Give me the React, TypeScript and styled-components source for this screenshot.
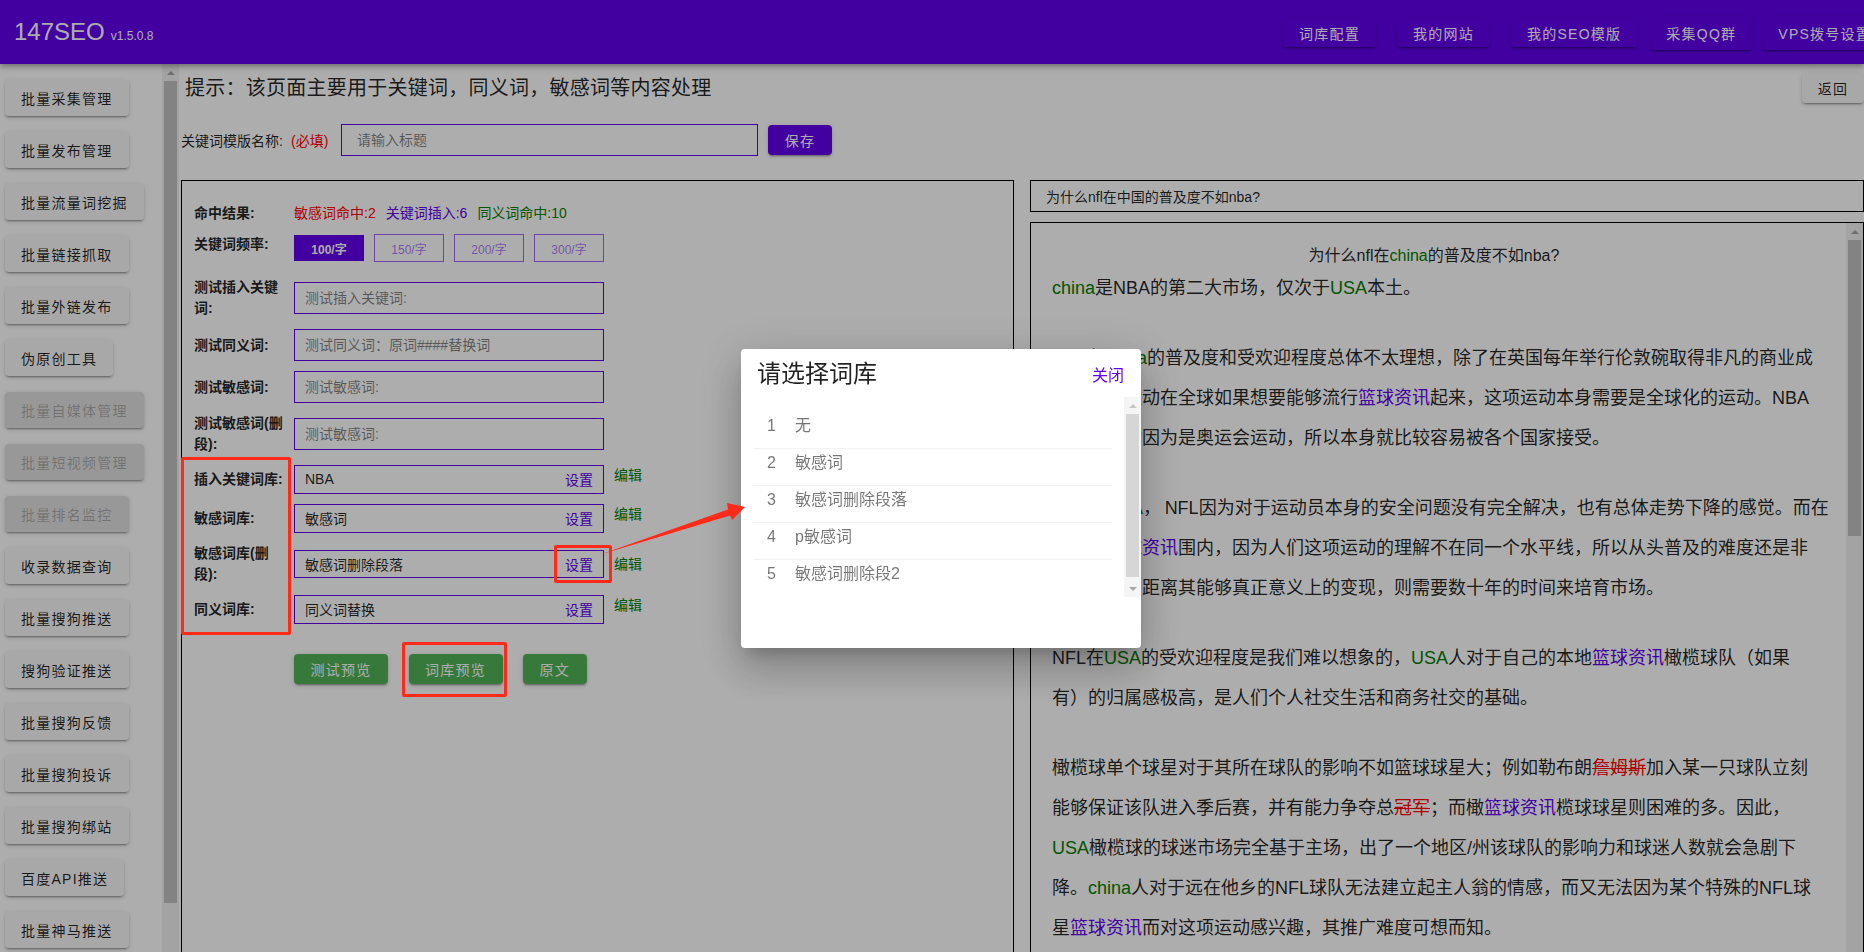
import React from "react";
import styled, { createGlobalStyle, css } from "styled-components";

const Global = createGlobalStyle`
  html, body { margin: 0; padding: 0; height: 100%; overflow: hidden; background: #fff; }
  body { font-family: "Liberation Sans", "Noto Sans CJK SC", sans-serif; color: rgba(0,0,0,.87); font-size: 14px; }
  * { box-sizing: border-box; }
`;

const raised = css`
  box-shadow: 0 3px 1px -2px rgba(0,0,0,.2), 0 2px 2px 0 rgba(0,0,0,.14), 0 1px 5px 0 rgba(0,0,0,.12);
`;

const Page = styled.div`
  width: 1864px;
  height: 952px;
  overflow: hidden;
  display: flex;
  flex-direction: column;
`;

const Header = styled.header`
  flex: 0 0 64px;
  display: flex;
  align-items: center;
  background: #6200ee;
  color: #fff;
  position: relative;
  z-index: 2;
  box-shadow: 0 2px 4px -1px rgba(0,0,0,.2), 0 4px 5px 0 rgba(0,0,0,.14), 0 1px 10px 0 rgba(0,0,0,.12);
`;

const Brand = styled.div`
  flex: 0 0 1283px;
  padding-left: 14px;
  display: flex;
  align-items: baseline;
  gap: 6px;
  font-size: 24px;
  small { font-size: 12px; }
`;

const Nav = styled.nav`
  display: flex;
  flex: 0 0 auto;
  align-items: center;
  padding-top: 1px;
`;

const NavButton = styled.button<{ $gap: number; $tall?: boolean }>`
  margin-left: ${(p) => p.$gap}px;
  height: ${(p) => (p.$tall ? 34 : 29)}px;
  padding: 0 16px;
  border: 0;
  border-radius: 4px;
  background: #6200ee;
  color: #fff;
  font: inherit;
  font-size: 14px;
  letter-spacing: 1.25px;
  white-space: nowrap;
  flex: 0 0 auto;
  ${raised}
`;

const Body = styled.div`
  flex: 1 1 auto;
  min-height: 0;
  display: flex;
  overflow: hidden;
`;

/* Painted scroll bar: the photographed browser hides native ones. */
const Rail = styled.div<{ $track: string }>`
  flex: 0 0 17px;
  width: 17px;
  display: flex;
  flex-direction: column;
  background: ${(p) => p.$track};
`;

const RailArrow = styled.div<{ $down?: boolean; $c: string }>`
  flex: 0 0 17px;
  display: flex;
  align-items: center;
  justify-content: center;
  margin-top: ${(p) => (p.$down ? "auto" : "0")};
  &::before {
    content: "";
    border-left: 4px solid transparent;
    border-right: 4px solid transparent;
    ${(p) => (p.$down ? `border-top: 4px solid ${p.$c};` : `border-bottom: 4px solid ${p.$c};`)}
  }
`;

const RailThumb = styled.div<{ $h: number; $c: string }>`
  flex: 0 0 ${(p) => p.$h}px;
  margin: 0 2px;
  background: ${(p) => p.$c};
`;

const Sidebar = styled.aside`
  flex: 0 0 179px;
  display: flex;
  overflow: hidden;
`;

const SideList = styled.div`
  flex: 1 1 auto;
  display: flex;
  flex-direction: column;
  align-items: flex-start;
  gap: 16px;
  padding: 16px 0 0 5px;
`;

const SideButton = styled.button<{ $off?: boolean }>`
  flex: 0 0 36px;
  padding: 0 16px;
  border: 0;
  border-radius: 4px;
  font: inherit;
  font-size: 14px;
  letter-spacing: 1.25px;
  white-space: nowrap;
  background: ${(p) => (p.$off ? "#e0e0e0" : "#f8f8f8")};
  color: ${(p) => (p.$off ? "rgba(0,0,0,.26)" : "rgba(0,0,0,.87)")};
  ${raised}
`;

const Main = styled.main`
  flex: 1 1 auto;
  min-width: 0;
  padding-left: 2px;
  display: flex;
  flex-direction: column;
  overflow: hidden;
`;

const TitleRow = styled.div`
  flex: 0 0 auto;
  margin-top: 9px;
  height: 30px;
  padding-left: 4px;
  display: flex;
  align-items: center;
  justify-content: space-between;
`;

const PageTitle = styled.h1`
  margin: 0 0 3px;
  font-size: 20px;
  font-weight: 400;
  letter-spacing: .25px;
`;

const BackButton = styled.button`
  height: 30px;
  width: 62px;
  padding: 0;
  border: 0;
  border-radius: 4px;
  background: #f8f8f8;
  color: rgba(0,0,0,.87);
  font: inherit;
  font-size: 14px;
  letter-spacing: 1.25px;
  ${raised}
`;

const NameRow = styled.div`
  flex: 0 0 auto;
  margin-top: 21px;
  height: 32px;
  display: flex;
  align-items: center;
`;

const NameLabel = styled.label`
  flex: 0 0 110px;
  font-size: 14px;
  white-space: nowrap;
`;

const Required = styled.span`
  flex: 0 0 50px;
  color: #f00;
  white-space: nowrap;
`;

const TextInput = styled.input<{ $w: number }>`
  width: ${(p) => p.$w}px;
  height: 32px;
  flex: 0 0 auto;
  padding: 0 15px;
  border: 1px solid #6200ee;
  border-radius: 0;
  outline: 0;
  background: transparent;
  font: inherit;
  font-size: 14px;
  &::placeholder { color: rgba(0,0,0,.5); opacity: 1; }
`;

const SmallInput = styled(TextInput)`
  padding: 0 10px;
`;

const SaveButton = styled.button`
  margin-left: 10px;
  width: 64px;
  height: 30px;
  border: 0;
  border-radius: 4px;
  background: #6200ee;
  color: #fff;
  font: inherit;
  font-size: 14px;
  letter-spacing: 1.25px;
  ${raised}
`;

const Columns = styled.div`
  flex: 0 0 800px;
  margin-top: 24px;
  display: grid;
  grid-template-columns: 833px 834px;
  gap: 16px;
`;

const LeftPanel = styled.section`
  border: 1px solid #000;
  padding: 22px 12px 0;
  display: flex;
  flex-direction: column;
  gap: 10px;
`;

const Row = styled.div<{ $align?: string; $mt?: number; $h?: number }>`
  display: flex;
  align-items: ${(p) => p.$align ?? "center"};
  margin-top: ${(p) => p.$mt ?? 0}px;
  min-height: ${(p) => p.$h ?? 0}px;
`;

const RowLabel = styled.div`
  flex: 0 0 100px;
  padding-right: 10px;
  font-size: 14px;
  font-weight: 700;
  line-height: 21px;
`;

const Hits = styled.div`
  display: flex;
  gap: 10px;
  font-size: 14px;
  line-height: 21px;
`;

const Hit = styled.span<{ $c: string }>`
  color: ${(p) => p.$c};
`;

const FreqGroup = styled.div`
  display: flex;
  align-items: center;
  gap: 10px;
  height: 28px;
`;

const FreqButton = styled.button<{ $on?: boolean }>`
  width: 70px;
  height: ${(p) => (p.$on ? 26 : 28)}px;
  padding: 0;
  font: inherit;
  font-size: 12px;
  border-radius: 0;
  border: ${(p) => (p.$on ? "0" : "1px solid rgba(98,0,238,.6)")};
  background: ${(p) => (p.$on ? "#6200ee" : "transparent")};
  color: ${(p) => (p.$on ? "#fff" : "rgba(98,0,238,.55)")};
  font-weight: ${(p) => (p.$on ? 700 : 400)};
`;

const LibField = styled.div`
  width: 310px;
  height: 28.33px;
  flex: 0 0 auto;
  padding: 0 10px;
  border: 1px solid #6200ee;
  display: flex;
  align-items: center;
  justify-content: space-between;
  font-size: 14px;
`;

const SetLink = styled.a`
  color: #6200ee;
`;

const EditLink = styled.a<{ $top?: boolean }>`
  margin-left: 10px;
  color: #008000;
  font-size: 14px;
  line-height: 21px;
  align-self: ${(p) => (p.$top ? "flex-start" : "center")};
`;

const Actions = styled.div`
  display: flex;
  gap: 20.5px;
  margin-top: 20px;
  padding-left: 100px;
`;

const GreenButton = styled.button`
  height: 30px;
  padding: 0 16.5px;
  border: 0;
  border-radius: 4px;
  background: #52b356;
  color: #fff;
  font: inherit;
  font-size: 14px;
  letter-spacing: 1.25px;
  ${raised}
`;

const RightColumn = styled.div`
  display: flex;
  flex-direction: column;
  gap: 10px;
  min-height: 0;
`;

const ArticleTitle = styled.div`
  flex: 0 0 32px;
  border: 1px solid #000;
  padding: 0 15px;
  display: flex;
  align-items: center;
  font-size: 14px;
`;

const ArticleBox = styled.div`
  flex: 1 1 auto;
  min-height: 0;
  border: 1px solid #000;
  display: flex;
  overflow: hidden;
`;

const Article = styled.article`
  flex: 1 1 auto;
  min-width: 0;
  padding: 21px 0 0 21px;
  font-size: 18px;
  line-height: 40px;
  white-space: nowrap;
`;

const Heading = styled.div`
  font-size: 16px;
  line-height: 24px;
  text-align: center;
  padding-right: 30px;
`;

const Para = styled.p`
  margin: 0 0 30px;
`;

const G = styled.span`color: #008000;`;
const P = styled.span`color: #6200ee;`;
const R = styled.span`color: #f00; text-decoration: line-through;`;

const Scrim = styled.div`
  position: fixed;
  inset: 0;
  background: rgba(0,0,0,.32);
  z-index: 5;
`;

const Dialog = styled.div`
  position: fixed;
  left: 741px;
  top: 349px;
  width: 400px;
  height: 299px;
  background: #fff;
  border-radius: 4px;
  z-index: 6;
  display: flex;
  flex-direction: column;
  box-shadow: 0 11px 15px -7px rgba(0,0,0,.2), 0 24px 38px 3px rgba(0,0,0,.14), 0 9px 46px 8px rgba(0,0,0,.12);
`;

const DialogHead = styled.div`
  flex: 0 0 48px;
  padding: 1px 17px 0 16px;
  display: flex;
  align-items: center;
  justify-content: space-between;
`;

const DialogTitle = styled.div`
  font-size: 24px;
  line-height: 36px;
`;

const CloseLink = styled.a`
  color: #6200ee;
  font-size: 16px;
`;

const DialogBody = styled.div`
  flex: 0 0 199px;
  display: flex;
`;

const DialogList = styled.div`
  flex: 1 1 auto;
  padding: 15px 12px 0;
`;

const Item = styled.div<{ $last?: boolean }>`
  display: flex;
  height: 37px;
  padding-top: 1px;
  line-height: 26px;
  font-size: 16px;
  color: rgba(0,0,0,.54);
  border-bottom: ${(p) => (p.$last ? "0" : "1px solid #f2f2f2")};
`;

const ItemNo = styled.span`
  flex: 0 0 42px;
  padding-left: 14px;
`;

const Mark = styled.div<{ $x: number; $y: number; $w: number; $h: number }>`
  position: fixed;
  left: ${(p) => p.$x}px;
  top: ${(p) => p.$y}px;
  width: ${(p) => p.$w}px;
  height: ${(p) => p.$h}px;
  border: 3px solid #ff2a1a;
  border-radius: 2px;
  z-index: 7;
`;

const ArrowSvg = styled.svg`
  position: fixed;
  left: 590px;
  top: 495px;
  z-index: 7;
`;

const side: [string, boolean?][] = [
  ["批量采集管理"], ["批量发布管理"], ["批量流量词挖掘"], ["批量链接抓取"], ["批量外链发布"], ["伪原创工具"],
  ["批量自媒体管理", true], ["批量短视频管理", true], ["批量排名监控", true],
  ["收录数据查询"], ["批量搜狗推送"], ["搜狗验证推送"], ["批量搜狗反馈"], ["批量搜狗投诉"], ["批量搜狗绑站"], ["百度API推送"], ["批量神马推送"],
];

const navs: [string, number, boolean?][] = [
  ["词库配置", 0], ["我的网站", 21], ["我的SEO模版", 21], ["采集QQ群", 13, true], ["VPS拨号设置", 10, true],
];

const items = ["无", "敏感词", "敏感词删除段落", "p敏感词", "敏感词删除段2"];

export default function App() {
  return (
    <Page>
      <Global />
      <Header>
        <Brand>147SEO <small>v1.5.0.8</small></Brand>
        <Nav>
          {navs.map(([t, g, tall]) => (
            <NavButton key={t} $gap={g} $tall={tall}>{t}</NavButton>
          ))}
        </Nav>
      </Header>
      <Body>
        <Sidebar>
          <SideList>
            {side.map(([t, off]) => (
              <SideButton key={t} $off={off}>{t}</SideButton>
            ))}
          </SideList>
          <Rail $track="#f1f1f1">
            <RailArrow $c="#a3a3a3" />
            <RailThumb $h={822} $c="#c1c1c1" />
          </Rail>
        </Sidebar>
        <Main>
          <TitleRow>
            <PageTitle>提示：该页面主要用于关键词，同义词，敏感词等内容处理</PageTitle>
            <BackButton>返回</BackButton>
          </TitleRow>
          <NameRow>
            <NameLabel>关键词模版名称:</NameLabel>
            <Required>(必填)</Required>
            <TextInput $w={417} placeholder="请输入标题" />
            <SaveButton>保存</SaveButton>
          </NameRow>
          <Columns>
            <LeftPanel>
              <Row $h={21}>
                <RowLabel>命中结果:</RowLabel>
                <Hits>
                  <Hit $c="#f00">敏感词命中:2</Hit>
                  <Hit $c="#6200ee">关键词插入:6</Hit>
                  <Hit $c="#008000">同义词命中:10</Hit>
                </Hits>
              </Row>
              <Row $align="flex-start">
                <RowLabel>关键词频率:</RowLabel>
                <FreqGroup>
                  <FreqButton $on>100/字</FreqButton>
                  <FreqButton>150/字</FreqButton>
                  <FreqButton>200/字</FreqButton>
                  <FreqButton>300/字</FreqButton>
                </FreqGroup>
              </Row>
              <Row $mt={5}>
                <RowLabel>测试插入关键词:</RowLabel>
                <SmallInput $w={310} placeholder="测试插入关键词:" />
              </Row>
              <Row>
                <RowLabel>测试同义词:</RowLabel>
                <SmallInput $w={310} placeholder="测试同义词：原词####替换词" />
              </Row>
              <Row>
                <RowLabel>测试敏感词:</RowLabel>
                <SmallInput $w={310} placeholder="测试敏感词:" />
              </Row>
              <Row>
                <RowLabel>测试敏感词(删段):</RowLabel>
                <SmallInput $w={310} placeholder="测试敏感词:" />
              </Row>
              <Row $h={29}>
                <RowLabel>插入关键词库:</RowLabel>
                <LibField>NBA<SetLink>设置</SetLink></LibField>
                <EditLink $top>编辑</EditLink>
              </Row>
              <Row $h={29}>
                <RowLabel>敏感词库:</RowLabel>
                <LibField>敏感词<SetLink>设置</SetLink></LibField>
                <EditLink $top>编辑</EditLink>
              </Row>
              <Row>
                <RowLabel>敏感词库(删段):</RowLabel>
                <LibField>敏感词删除段落<SetLink>设置</SetLink></LibField>
                <EditLink>编辑</EditLink>
              </Row>
              <Row $h={29}>
                <RowLabel>同义词库:</RowLabel>
                <LibField>同义词替换<SetLink>设置</SetLink></LibField>
                <EditLink $top>编辑</EditLink>
              </Row>
              <Actions>
                <GreenButton>测试预览</GreenButton>
                <GreenButton>词库预览</GreenButton>
                <GreenButton>原文</GreenButton>
              </Actions>
            </LeftPanel>
            <RightColumn>
              <ArticleTitle>为什么nfl在中国的普及度不如nba?</ArticleTitle>
              <ArticleBox>
                <Article>
                  <Heading>为什么nfl在<G>china</G>的普及度不如nba?</Heading>
                  <Para><G>china</G>是NBA的第二大市场，仅次于<G>USA</G>本土。</Para>
                  <Para>
                    NFL在<G>china</G>的普及度和受欢迎程度总体不太理想，除了在英国每年举行伦敦碗取得非凡的商业成<br />
                    绩，这项运动在全球如果想要能够流行<P>篮球资讯</P>起来，这项运动本身需要是全球化的运动。NBA<br />
                    而篮球运动因为是奥运会运动，所以本身就比较容易被各个国家接受。
                  </Para>
                  <Para>
                    如今在<G>USA</G>，{"\u2009"}NFL因为对于运动员本身的安全问题没有完全解决，也有总体走势下降的感觉。而在<br />
                    欧洲范<P>篮球资讯</P>围内，因为人们这项运动的理解不在同一个水平线，所以从头普及的难度还是非<br />
                    常困难的，距离其能够真正意义上的变现，则需要数十年的时间来培育市场。
                  </Para>
                  <Para>
                    NFL在<G>USA</G>的受欢迎程度是我们难以想象的，<G>USA</G>人对于自己的本地<P>篮球资讯</P>橄榄球队（如果<br />
                    有）的归属感极高，是人们个人社交生活和商务社交的基础。
                  </Para>
                  <Para>
                    橄榄球单个球星对于其所在球队的影响不如篮球球星大；例如勒布朗<R>詹姆斯</R>加入某一只球队立刻<br />
                    能够保证该队进入季后赛，并有能力争夺总<R>冠军</R>；而橄<P>篮球资讯</P>榄球球星则困难的多。因此，<br />
                    <G>USA</G>橄榄球的球迷市场完全基于主场，出了一个地区/州该球队的影响力和球迷人数就会急剧下<br />
                    降。<G>china</G>人对于远在他乡的NFL球队无法建立起主人翁的情感，而又无法因为某个特殊的NFL球<br />
                    星<P>篮球资讯</P>而对这项运动感兴趣，其推广难度可想而知。
                  </Para>
                </Article>
                <Rail $track="#f1f1f1">
                  <RailArrow $c="#a3a3a3" />
                  <RailThumb $h={296} $c="#c1c1c1" />
                </Rail>
              </ArticleBox>
            </RightColumn>
          </Columns>
        </Main>
      </Body>
      <Scrim />
      <Dialog>
        <DialogHead>
          <DialogTitle>请选择词库</DialogTitle>
          <CloseLink>关闭</CloseLink>
        </DialogHead>
        <DialogBody>
          <DialogList>
            {items.map((t, i) => (
              <Item key={t} $last={i === items.length - 1}>
                <ItemNo>{i + 1}</ItemNo>
                <span>{t}</span>
              </Item>
            ))}
          </DialogList>
          <Rail $track="#f5f5f5">
            <RailArrow $c="#c8c8c8" />
            <RailThumb $h={163} $c="#d6d6d6" />
            <RailArrow $down $c="#a8a8a8" />
          </Rail>
        </DialogBody>
      </Dialog>
      <Mark $x={181} $y={457} $w={110} $h={178} />
      <Mark $x={554} $y={545} $w={58} $h={38} />
      <Mark $x={402} $y={642} $w={105} $h={55} />
      <ArrowSvg width="170" height="70" viewBox="590 495 170 70">
        <polygon points="599,555 728,509.5 727,503 745,507 732,520 730,515.5" fill="#ff2a1a" />
      </ArrowSvg>
    </Page>
  );
}
